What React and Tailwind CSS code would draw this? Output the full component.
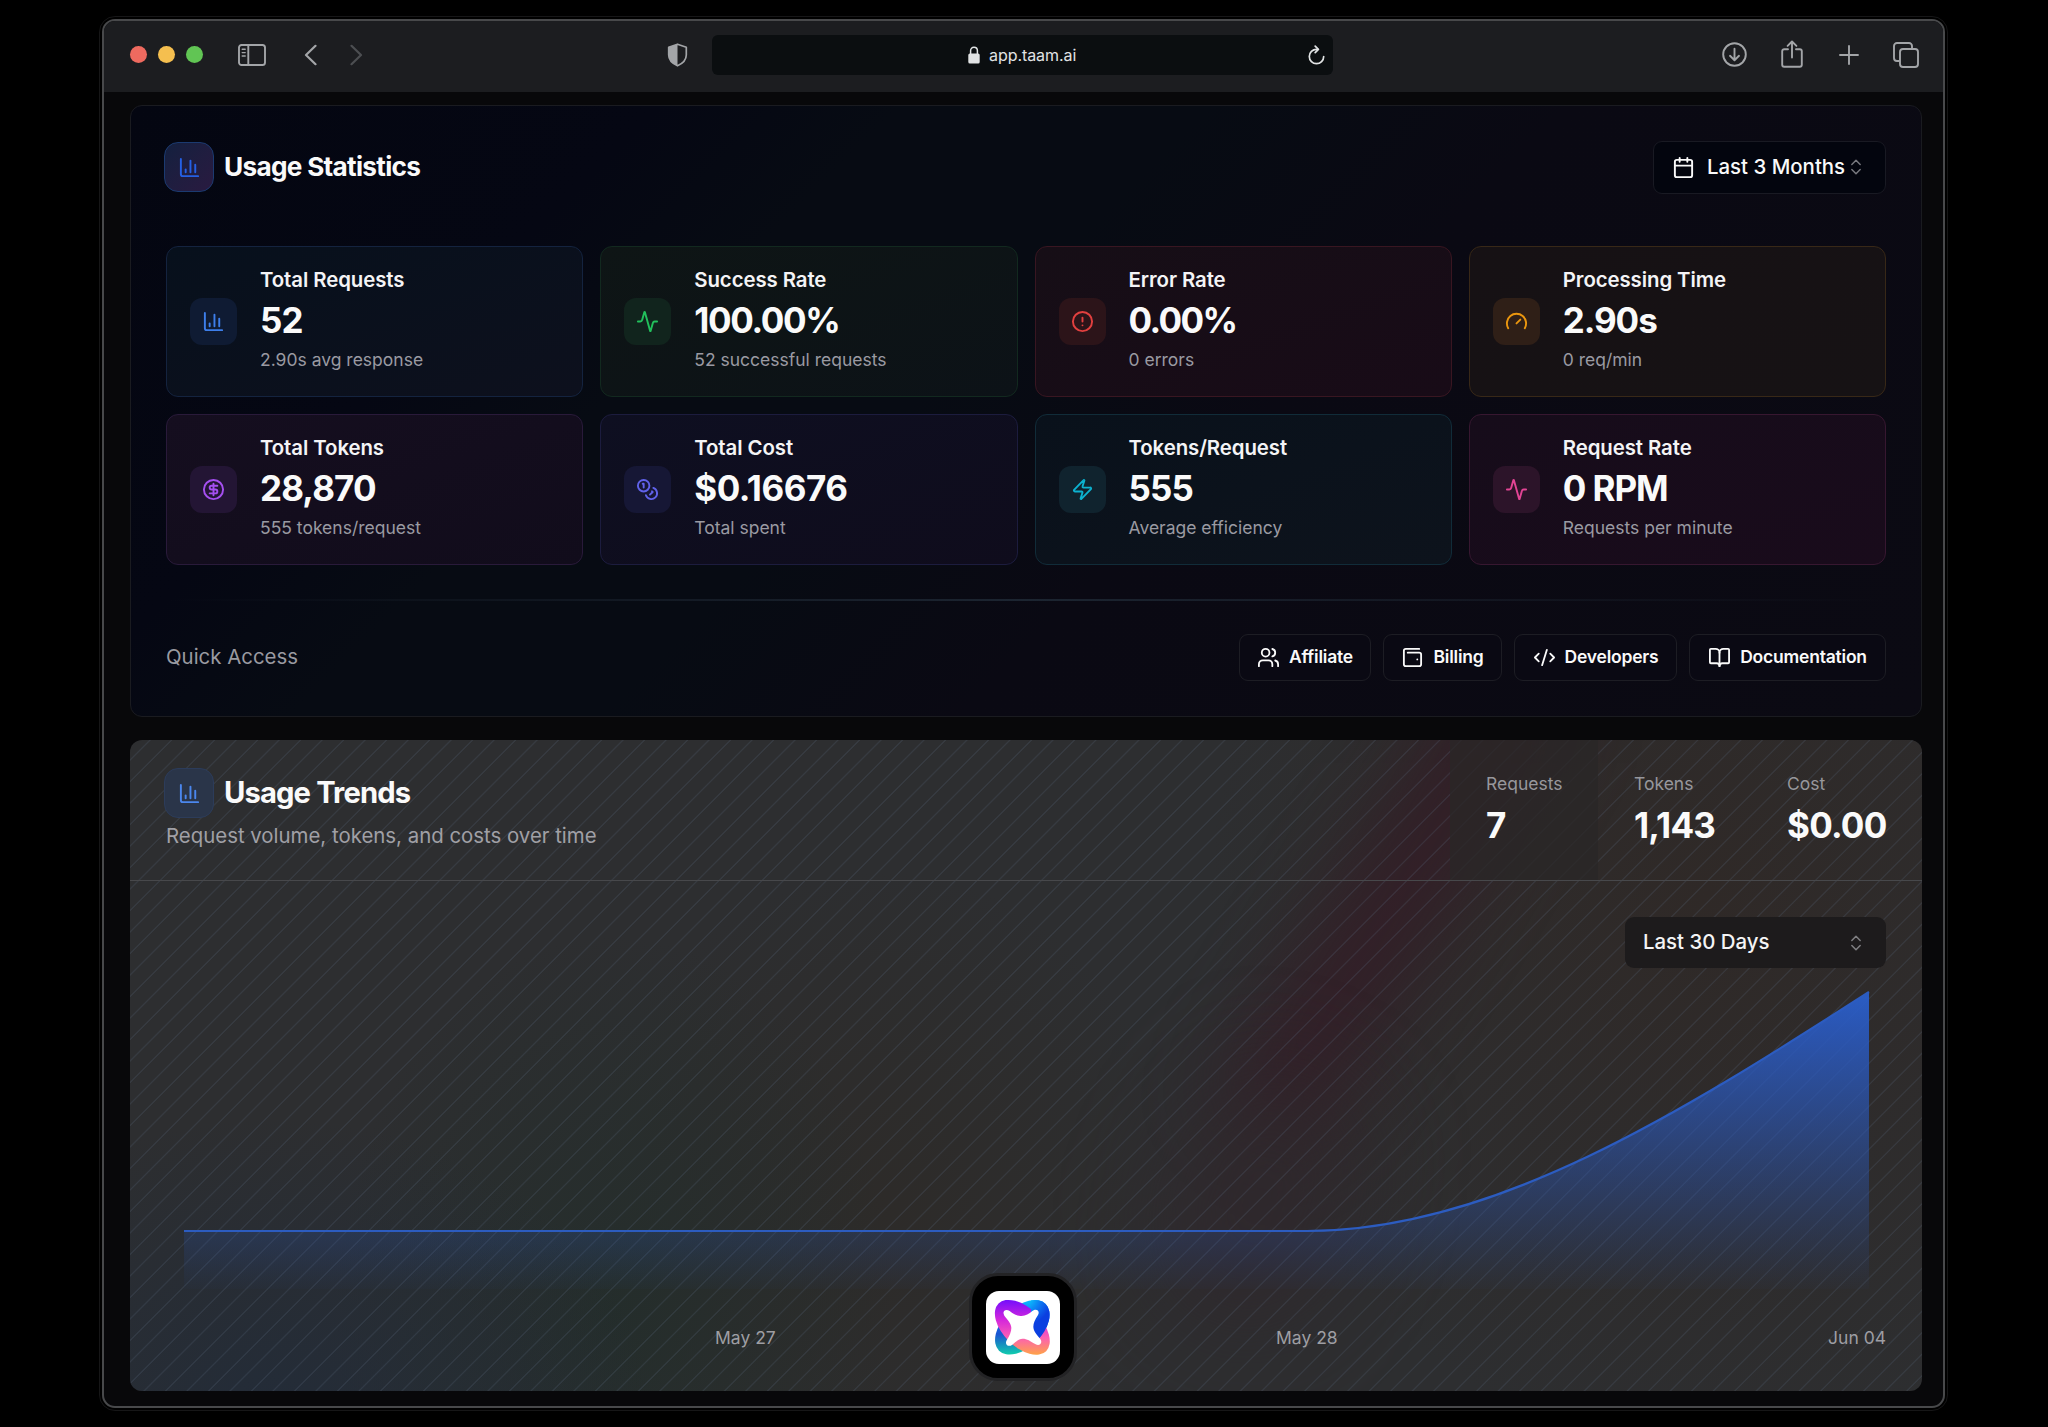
import React from "react";
import {
  Activity,
  BookOpen,
  Calendar,
  ChartColumn,
  ChevronsUpDown,
  CircleAlert,
  CircleDollarSign,
  CodeXml,
  Gauge,
  Users,
  WalletMinimal,
  Zap,
} from "lucide-react";

function Coins({ className, strokeWidth }) {
  return (
    <svg viewBox="0 0 24 24" fill="none" stroke="currentColor" strokeWidth={strokeWidth} strokeLinecap="round" strokeLinejoin="round" className={className}>
      <circle cx="8" cy="8" r="6" />
      <path d="M18.09 10.37A6 6 0 1 1 10.34 18" />
      <path d="M7 6h1v4" />
      <path d="m16.71 13.88.7.71-2.82 2.82" />
    </svg>
  );
}

const STATS = [
  {
    title: "Total Requests", value: "52", note: "2.90s avg response", Icon: ChartColumn, tracking: "tracking-[-0.025em]",
    card: "border-[#14233f] from-[#07101c] to-[#0d101d]", tile: "bg-[#0f1b33]", icon: "text-[#3d7eea]",
  },
  {
    title: "Success Rate", value: "100.00%", note: "52 successful requests", Icon: Activity, tracking: "tracking-[-0.039em]",
    card: "border-[#12291f] from-[#0e1515] to-[#0c1217]", tile: "bg-[#11241d]", icon: "text-[#22c05c]",
  },
  {
    title: "Error Rate", value: "0.00%", note: "0 errors", Icon: CircleAlert, tracking: "tracking-[-0.046em]",
    card: "border-[#391621] from-[#160e16] to-[#180b17]", tile: "bg-[#2c1419]", icon: "text-[#e2403f]",
  },
  {
    title: "Processing Time", value: "2.90s", note: "0 req/min", Icon: Gauge, tracking: "tracking-[-0.03em]",
    card: "border-[#382817] from-[#161114] to-[#161214]", tile: "bg-[#2f1f17]", icon: "text-[#ea960f]",
  },
  {
    title: "Total Tokens", value: "28,870", note: "555 tokens/request", Icon: CircleDollarSign, tracking: "tracking-[-0.025em]",
    card: "border-[#291a3a] from-[#150e1f] to-[#110c1b]", tile: "bg-[#231534]", icon: "text-[#a54ff0]",
  },
  {
    title: "Total Cost", value: "$0.16676", note: "Total spent", Icon: Coins, tracking: "tracking-[-0.014em]",
    card: "border-[#1c1c3e] from-[#0e0f21] to-[#0f0c1c]", tile: "bg-[#161735]", icon: "text-[#6062ea]",
  },
  {
    title: "Tokens/Request", value: "555", note: "Average efficiency", Icon: Zap, tracking: "tracking-[-0.025em]",
    card: "border-[#112c39] from-[#09111b] to-[#0d131c]", tile: "bg-[#10232e]", icon: "text-[#0cb2d0]",
  },
  {
    title: "Request Rate", value: "0 RPM", note: "Requests per minute", Icon: Activity, tracking: "tracking-[-0.03em]",
    card: "border-[#371730] from-[#160c1a] to-[#190b1b]", tile: "bg-[#2c1429]", icon: "text-[#e24494]",
  },
];

const LINKS = [
  { label: "Affiliate", Icon: Users, width: "w-[132px]" },
  { label: "Billing", Icon: WalletMinimal, width: "w-[119px]" },
  { label: "Developers", Icon: CodeXml, width: "w-[163px]" },
  { label: "Documentation", Icon: BookOpen, width: "w-[197px]" },
];

const TOTALS = [
  { label: "Requests", value: "7", active: true, width: "w-[148px] pl-[36px]" },
  { label: "Tokens", value: "1,143", active: false, width: "w-[153px] pl-[36px]" },
  { label: "Cost", value: "$0.00", active: false, width: "w-[171px] pl-[36px]" },
];

function TitleBar() {
  const stroke = { fill: "none", stroke: "currentColor", strokeWidth: 1.9, strokeLinecap: "round", strokeLinejoin: "round" };
  return (
    <header className="flex h-[71px] shrink-0 items-center bg-[#1c1d20] pb-[4px] pl-[26px] pr-[24px] text-[#a3a5a8]">
      <div className="flex gap-[11px]">
        <span className="size-[17px] rounded-full bg-[#ee6a5f]" />
        <span className="size-[17px] rounded-full bg-[#f5bf4f]" />
        <span className="size-[17px] rounded-full bg-[#61c554]" />
      </div>
      <svg viewBox="0 0 28 22" {...stroke} className="ml-[35px] h-[22px] w-[28px]">
        <rect x="1" y="1" width="26" height="20" rx="2.6" />
        <path d="M10.3 1v20" />
        <path d="M4.2 5.2h3M4.2 8.6h3M4.2 12h3" strokeWidth="1.4" />
      </svg>
      <svg viewBox="0 0 13 22" {...stroke} strokeWidth="2.2" className="ml-[38px] h-[22px] w-[13px]">
        <path d="M11.5 1.8 2 11l9.5 9.2" />
      </svg>
      <svg viewBox="0 0 13 22" {...stroke} strokeWidth="2.2" className="ml-[33px] h-[22px] w-[13px] text-[#4c4e51]">
        <path d="M1.5 1.8 11 11l-9.5 9.2" />
      </svg>
      <svg viewBox="0 0 20 24" className="ml-[304px] h-[24px] w-[21px]">
        <path d="M10 1.2 18.8 4.3V12c0 5.200-4 8.600-8.800 10.800C5.200 20.600 1.200 17.200 1.200 12V4.300Z" fill="none" stroke="currentColor" strokeWidth="1.7" strokeLinejoin="round" />
        <path d="M10 1.200v21.600C5.200 20.600 1.200 17.200 1.200 12V4.300Z" fill="currentColor" />
      </svg>
      <div className="ml-[24px] flex h-[40px] w-[621px] items-center rounded-md bg-[#0b0e10] pl-[256px] pr-[8px] pt-px text-[#e1e3e4]">
        <svg viewBox="0 0 12 18" className="mb-px h-[18px] w-[12px]">
          <rect x="0.3" y="7.5" width="11.4" height="10" rx="1.6" fill="currentColor" />
          <path d="M2.6 8V4.800C2.600 2.600 4 1.200 6 1.200s3.400 1.400 3.400 3.600V8" fill="none" stroke="currentColor" strokeWidth="1.5" />
        </svg>
        <span className="ml-[9px] text-[16px] tracking-[-0.004em]">app.taam.ai</span>
        <svg viewBox="0 0 17 20" {...stroke} strokeWidth="1.7" className="ml-auto h-[20px] w-[17px]">
          <path d="M9.8 4.300H8.500a7.200 7.200 0 1 0 7.200 7.200" />
          <path d="M7.2 1.200 10.400 4.300 7.200 7.600" />
        </svg>
      </div>
      <svg viewBox="0 0 25 25" {...stroke} className="ml-auto size-[25px]">
        <circle cx="12.5" cy="12.5" r="11.3" />
        <path d="M12.5 6.800v11M8 13.800l4.500 4.400 4.500-4.400" />
      </svg>
      <svg viewBox="0 0 22 28" {...stroke} className="mb-[2px] ml-[34px] h-[28px] w-[22px]">
        <path d="M7 9.200H3.200a2 2 0 0 0-2 2v13.600a2 2 0 0 0 2 2h15.600a2 2 0 0 0 2-2V11.200a2 2 0 0 0-2-2H15" />
        <path d="M11 17.500V1.700M6.600 5.900 11 1.500l4.400 4.400" />
      </svg>
      <svg viewBox="0 0 20 20" {...stroke} className="ml-[36px] size-[20px]">
        <path d="M10 1v18M1 10h18" />
      </svg>
      <svg viewBox="0 0 26 26" {...stroke} className="ml-[34px] size-[26px]">
        <rect x="7" y="7" width="18" height="18" rx="3" />
        <path d="M19 6.500V4a3 3 0 0 0-3-3H4a3 3 0 0 0-3 3v12a3 3 0 0 0 3 3h2.500" />
      </svg>
    </header>
  );
}

function StatCard({ title, value, note, Icon, tracking, card, tile, icon }) {
  return (
    <div className={`flex h-[151px] items-center rounded-[12px] border-[1.5px] bg-linear-to-br pl-[23px] ${card}`}>
      <div className={`flex size-[47px] items-center justify-center rounded-[12px] ${tile}`}>
        <Icon className={`size-[23px] ${icon}`} strokeWidth={2} />
      </div>
      <div className="ml-[23px] flex flex-col pb-[6px]">
        <span className="h-[30px] text-[20.4px] leading-[30px] font-semibold tracking-[-0.004em] text-[#f4f4f6]">{title}</span>
        <span className={`mt-[5px] h-[40px] text-[35px] leading-[40px] font-bold text-[#fafafa] ${tracking}`}>{value}</span>
        <span className="mt-[8px] h-[24px] text-[17.5px] leading-[24px] text-[#9a9aa2]">{note}</span>
      </div>
    </div>
  );
}

function StatisticsPanel() {
  return (
    <section className="flex h-[612px] flex-col rounded-[12px] border-[1.5px] border-[#1a1b20] bg-[linear-gradient(135deg,#040611_0%,#050713_22%,#070b13_32%,#070b13_45%,#0a0913_60%,#0b0a13_100%)] px-[35px] pt-[35px]">
      <div className="flex h-[52px] items-center justify-between">
        <div className="-ml-[2px] flex items-center">
          <div className="flex size-[50px] items-center justify-center rounded-[14px] border-[1.5px] border-[#1b3a70] bg-linear-to-br from-[#13203f] to-[#291a40]">
            <ChartColumn className="size-[23px] text-[#2560e4]" strokeWidth={2} />
          </div>
          <h2 className="ml-[10px] text-[26.2px] font-bold tracking-[-0.027em] text-[#fafafa]">Usage Statistics</h2>
        </div>
        <button className="flex h-[53px] w-[233px] items-center rounded-[9px] border-[1.5px] border-[#191a23] bg-[#03050e] pl-[18px] text-[#fafafa]">
          <Calendar className="size-[23px]" strokeWidth={2} />
          <span className="ml-[12px] text-[20.4px] font-medium">Last 3 Months</span>
          <ChevronsUpDown className="ml-[1px] size-[20px] text-[#76777d]" strokeWidth={1.8} />
        </button>
      </div>
      <div className="mt-[53px] grid grid-cols-4 gap-[17px]">
        {STATS.map((s) => (
          <StatCard key={s.title} {...s} />
        ))}
      </div>
      <div className="mt-[34px] h-[2px] bg-linear-to-r from-transparent via-[#1c2531] to-transparent" />
      <div className="mt-[33px] flex h-[47px] items-center justify-between">
        <span className="text-[20.4px] text-[#9a9aa1]">Quick Access</span>
        <div className="flex gap-[12px]">
          {LINKS.map(({ label, Icon, width }) => (
            <button key={label} className={`flex h-[47px] items-center justify-center gap-[9px] rounded-[9px] border-[1.5px] border-[#1d1d24] bg-[#0a0913] text-[17.5px] font-semibold tracking-[-0.012em] text-[#fafafa] ${width}`}>
              <Icon className="size-[23px] shrink-0" strokeWidth={1.9} />
              {label}
            </button>
          ))}
        </div>
      </div>
    </section>
  );
}

function AreaChart() {
  return (
    <svg viewBox="0 0 1792 510" className="absolute inset-0 size-full">
      <defs>
        <linearGradient id="requestsFill" x1="0" y1="111" x2="0" y2="408" gradientUnits="userSpaceOnUse">
          <stop offset="0" stopColor="#2a5fcb" stopOpacity="0.96" />
          <stop offset="0.12" stopColor="#2a5bc4" stopOpacity="0.88" />
          <stop offset="1" stopColor="#2a5bc4" stopOpacity="0.02" />
        </linearGradient>
      </defs>
      <path d="M54 350H1177C1364 350 1552 231 1739 111V408H54Z" fill="url(#requestsFill)" />
      <path d="M54 350H1177C1364 350 1552 231 1739 111" fill="none" stroke="#2c5cc0" strokeWidth="2.2" />
    </svg>
  );
}

function TrendsPanel() {
  return (
    <section className="relative mt-[23px] flex h-[651px] flex-col overflow-hidden rounded-[12px] bg-[#2d2e30]">
      {/* soft colour wash */}
      <div className="absolute inset-0 bg-[radial-gradient(ellipse_380px_300px_at_8%_104%,#202b3acc,transparent),radial-gradient(ellipse_280px_380px_at_27%_88%,#222d2acc,transparent),radial-gradient(ellipse_300px_340px_at_42%_72%,#2d2a27cc,transparent),radial-gradient(ellipse_500px_560px_at_88%_24%,#2f2927,transparent)]" />
      <div className="absolute top-[-110px] left-[1215px] h-[540px] w-[100px] rotate-[31deg] rounded-full bg-[#341a25] opacity-80 blur-[42px]" />
      <div className="absolute top-[330px] left-[1040px] h-[260px] w-[180px] rotate-[20deg] rounded-full bg-[#30262b] opacity-70 blur-[50px]" />
      <div className="absolute inset-0 bg-[repeating-linear-gradient(135deg,transparent_0px,transparent_13.2px,rgba(84,98,118,0.24)_14px,rgba(84,98,118,0.24)_14.6px,transparent_15.2px)]" />
      <div className="relative flex h-[141px] justify-between border-b-[1.5px] border-[#47484b]">
        <div className="pt-[28px] pl-[34px]">
          <div className="flex items-center">
            <div className="flex size-[50px] items-center justify-center rounded-[14px] border-[1.5px] border-[#2c3c5a] bg-[#2a3549]">
              <ChartColumn className="size-[23px] text-[#4b87ee]" strokeWidth={2} />
            </div>
            <h2 className="ml-[10px] text-[29.2px] leading-[36px] font-bold tracking-[-0.03em] text-[#fafafa]">Usage Trends</h2>
          </div>
          <p className="mt-[3px] pl-[2px] text-[20.4px] leading-[29px] text-[#a0a0a6]">Request volume, tokens, and costs over time</p>
        </div>
        <div className="flex">
          {TOTALS.map((t) => (
            <div key={t.label} className={`flex h-full flex-col pt-[32px] ${t.width} ${t.active ? "bg-[#2a2727]/75" : ""}`}>
              <span className="h-[24px] text-[17.5px] leading-[24px] text-[#97979c]">{t.label}</span>
              <span className="mt-[9px] h-[40px] text-[35px] leading-[40px] font-bold tracking-[-0.022em] text-[#fafafa]">{t.value}</span>
            </div>
          ))}
        </div>
      </div>
      <div className="relative flex flex-1 flex-col">
        <AreaChart />
        <div className="relative flex justify-end pt-[36px] pr-[36px]">
          <button className="flex h-[51px] w-[261px] items-center justify-between rounded-[9px] bg-[#1d1b1c] pr-[20px] pl-[18px] text-[20.4px] font-medium text-[#f4f4f5]">
            Last 30 Days
            <ChevronsUpDown className="size-[20px] text-[#7f7f82]" strokeWidth={1.8} />
          </button>
        </div>
        <div className="relative mt-auto mb-[41px] grid h-[24px] grid-cols-3 pr-[36px] pl-[334px] text-[17.5px] leading-[24px] text-[#9e9ea3]">
          <span className="pl-[251px]">May 27</span>
          <span className="pl-[338px]">May 28</span>
          <span className="text-right">Jun 04</span>
        </div>
      </div>
    </section>
  );
}

function DockLogo() {
  return (
    <div className="absolute top-[1273px] left-[969px] flex h-[108px] w-[108px] items-center justify-center rounded-[29px] border-[3px] border-[#232325] bg-black">
      <div className="flex h-[73px] w-[74px] items-center justify-center rounded-[13px] bg-white">
        <svg viewBox="0 0 180 180" className="size-[60px]">
          <defs>
            <linearGradient id="ringCool" x1="160" y1="15" x2="20" y2="165" gradientUnits="userSpaceOnUse">
              <stop offset="0.05" stopColor="#0ad2ff" />
              <stop offset="0.36" stopColor="#0d6df5" />
              <stop offset="0.6" stopColor="#1a55d0" />
              <stop offset="0.95" stopColor="#0fe0a8" />
            </linearGradient>
            <linearGradient id="ringWarm" x1="20" y1="20" x2="160" y2="160" gradientUnits="userSpaceOnUse">
              <stop offset="0.05" stopColor="#6a0cff" />
              <stop offset="0.38" stopColor="#d426dc" />
              <stop offset="0.65" stopColor="#fb5fb4" />
              <stop offset="0.95" stopColor="#ffac38" />
            </linearGradient>
            <radialGradient id="ringOver" cx="156" cy="30" r="84" gradientUnits="userSpaceOnUse">
              <stop offset="0.1" stopColor="#0ad6ff" />
              <stop offset="0.6" stopColor="#0d7bf2" />
              <stop offset="1" stopColor="#0b3fe0" />
            </radialGradient>
            <clipPath id="rightCross">
              <path d="M114 0H180V130H114Z" />
            </clipPath>
          </defs>
          <ellipse cx="88" cy="91" rx="99" ry="60" transform="rotate(-45 88 91)" fill="url(#ringCool)" />
          <ellipse cx="88" cy="91" rx="101" ry="58" transform="rotate(45 88 91)" fill="url(#ringWarm)" />
          <g clipPath="url(#rightCross)">
            <ellipse cx="88" cy="91" rx="99" ry="60" transform="rotate(-45 88 91)" fill="url(#ringOver)" />
          </g>
          <path
            d="M34 56C26 42 38 34 50 42C64 54 76 57 86 57C98 57 108 50 118 42C130 32 142 42 135 54C126 68 121 78 121 89C121 102 132 114 142 126C150 138 140 148 128 142C112 132 102 125 89 125C78 125 68 134 58 143C46 152 34 142 41 130C50 116 55 104 55 93C55 80 45 70 34 56Z"
            fill="#fff"
          />
        </svg>
      </div>
    </div>
  );
}

export default function App() {
  return (
    <div className="relative h-[1427px] w-[2048px] overflow-hidden bg-black pt-[19px] pl-[102px] font-['Inter',sans-serif]">
      <div className="flex h-[1389px] w-[1843px] flex-col overflow-hidden rounded-[13px] border-2 border-[#48494b] bg-[#08080a] outline-1 outline-offset-[2px] outline-[#161617]">
        <TitleBar />
        <main className="flex flex-1 flex-col pt-[13px] pr-[21px] pl-[26px]">
          <StatisticsPanel />
          <TrendsPanel />
        </main>
      </div>
      <DockLogo />
    </div>
  );
}
